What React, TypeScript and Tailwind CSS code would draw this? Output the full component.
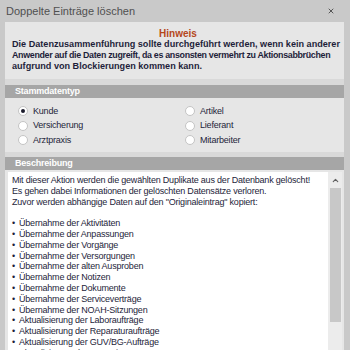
import { ChevronUp, X } from "lucide-react";

const leftOptions = ["Kunde", "Versicherung", "Arztpraxis"];
const rightOptions = ["Artikel", "Lieferant", "Mitarbeiter"];

const items = [
  "Übernahme der Aktivitäten",
  "Übernahme der Anpassungen",
  "Übernahme der Vorgänge",
  "Übernahme der Versorgungen",
  "Übernahme der alten Ausproben",
  "Übernahme der Notizen",
  "Übernahme der Dokumente",
  "Übernahme der Serviceverträge",
  "Übernahme der NOAH-Sitzungen",
  "Aktualisierung der Laboraufträge",
  "Aktualisierung der Reparaturaufträge",
  "Aktualisierung der GUV/BG-Aufträge",
  "Aktualisierung der Garantien",
];

const Radio = ({ label, checked }: { label: string; checked?: boolean }) => (
  <label className="flex items-center gap-[5px] h-[14.5px]">
    <span className="w-[10px] h-[10px] rounded-full bg-white border border-[#c4c4c4] flex items-center justify-center">
      {checked && <span className="w-[4px] h-[4px] rounded-full bg-[#1c1c2c]" />}
    </span>
    <span className="text-[#1e1e3a]">{label}</span>
  </label>
);

export default function App() {
  return (
    <div
      className="w-[350px] h-[350px] overflow-hidden bg-[#c9c9c9] flex flex-col text-[9px] leading-[10.8px] tracking-[-0.2px]"
      style={{ fontFamily: '"Liberation Sans", Arial, sans-serif' }}
    >
      <div className="h-[22px] flex items-center justify-between pl-[6px] pr-[15px] shrink-0 tracking-normal">
        <span className="text-[11px] text-[#505050]">Doppelte Einträge löschen</span>
        <X className="w-[8px] h-[8px] text-[#555]" strokeWidth={3} />
      </div>

      <div className="flex-1 ml-[5px] mr-[6px] bg-[#d9d9d9] flex flex-col min-h-0">
        <div className="h-[57px] bg-[#e6e6e6] pl-[7px] pt-[6px] font-bold shrink-0 overflow-hidden">
          <div className="text-center text-[10px] leading-[11px] text-[#b5471b] tracking-normal">Hinweis</div>
          <div className="text-[#1e1e3a] text-[9.1px] whitespace-nowrap">
            <span className="block tracking-normal">
              Die Datenzusammenführung sollte durchgeführt werden, wenn kein anderer
            </span>
            <span className="block text-[8.9px] tracking-[-0.32px]">
              Anwender auf die Daten zugreift, da es ansonsten vermehrt zu Aktionsabbrüchen
            </span>
            <span className="block tracking-normal">aufgrund von Blockierungen kommen kann.</span>
          </div>
        </div>

        <div className="mt-[6px] bg-[#e6e6e6] shrink-0">
          <div className="h-[13px] bg-[#a6a6a6] text-white font-bold pl-[10px] flex items-center">Stammdatentyp</div>
          <div className="grid grid-cols-2 pl-[13px] pt-[6px] h-[54px]">
            <div className="flex flex-col">
              {leftOptions.map((o, i) => (
                <Radio key={o} label={o} checked={i === 0} />
              ))}
            </div>
            <div className="flex flex-col pl-[4px]">
              {rightOptions.map((o) => (
                <Radio key={o} label={o} />
              ))}
            </div>
          </div>
        </div>

        <div className="mt-[5px] bg-[#e6e6e6] flex-1 flex flex-col min-h-0">
          <div className="h-[13px] bg-[#a6a6a6] text-white font-bold pl-[10px] flex items-center shrink-0">
            Beschreibung
          </div>
          <div className="flex-1 flex min-h-0 pl-[3px] pr-[2px] pt-[2px]">
            <div className="flex-1 bg-white pl-[4px] pt-[3px] text-[#1e1e3a] overflow-hidden whitespace-nowrap">
              <p>Mit dieser Aktion werden die gewählten Duplikate aus der Datenbank gelöscht!</p>
              <p>Es gehen dabei Informationen der gelöschten Datensätze verloren.</p>
              <p>Zuvor werden abhängige Daten auf den "Originaleintrag" kopiert:</p>
              <p>&nbsp;</p>
              {items.map((t) => (
                <p key={t}>
                  <span className="inline-block w-[7px]">•</span>
                  {t}
                </p>
              ))}
            </div>
            <div className="w-[14px] bg-[#ececec] flex flex-col items-center">
              <div className="h-[16px] flex items-center justify-center">
                <ChevronUp className="w-[9px] h-[9px] text-[#606060]" strokeWidth={3} />
              </div>
              <div className="w-[11px] h-[134px] bg-[#c8c8c8]" />
            </div>
          </div>
        </div>
      </div>
    </div>
  );
}
